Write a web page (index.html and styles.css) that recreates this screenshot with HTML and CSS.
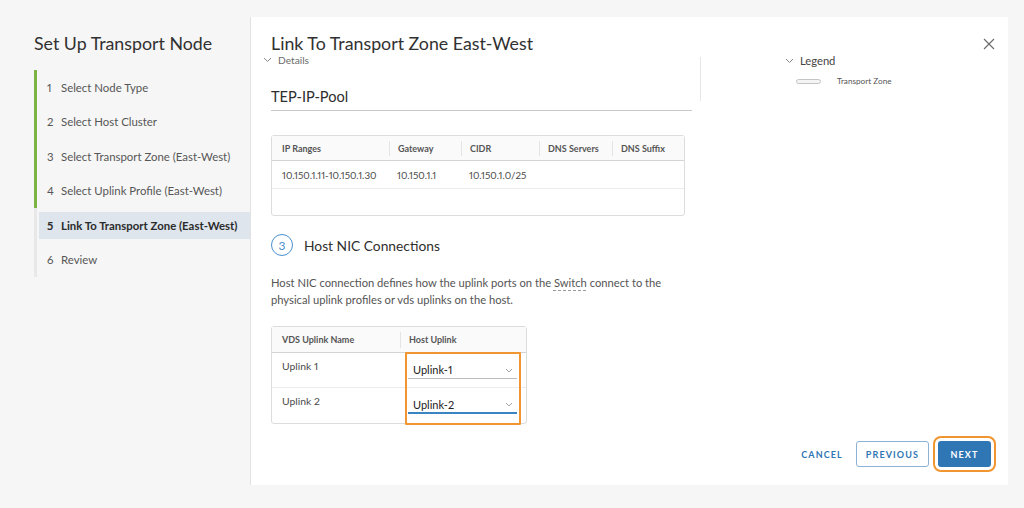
FILE: index.html
```html
<!DOCTYPE html>
<html lang="en">
    <head>
        <title>Set Up Transport Node</title>
        <link rel="stylesheet" href="styles.css">
    </head>
    <body>
        <div class="page">
            <aside class="wizard-nav">
                <h1 class="wizard-title">Set Up Transport Node</h1>
                <ol class="steps">
                    <li class="step done"><span class="step-label"><span class="step-num">1</span>Select Node Type</span></li>
                    <li class="step done"><span class="step-label"><span class="step-num">2</span>Select Host Cluster</span></li>
                    <li class="step done"><span class="step-label"><span class="step-num">3</span>Select Transport Zone (East-West)</span></li>
                    <li class="step done"><span class="step-label"><span class="step-num">4</span>Select Uplink Profile (East-West)</span></li>
                    <li class="step active"><span class="step-label"><span class="step-num">5</span>Link To Transport Zone (East-West)</span></li>
                    <li class="step"><span class="step-label"><span class="step-num">6</span>Review</span></li>
                </ol>
            </aside>

            <section class="modal">
                <header class="modal-header">
                    <h2 class="modal-title">Link To Transport Zone East-West</h2>
                    <button class="close-btn" aria-label="Close">
                        <svg width="12" height="12" viewBox="0 0 12 12"><path d="M1 1 L11 11 M11 1 L1 11" stroke="#6a6a6a" stroke-width="1.1" fill="none"/></svg>
                    </button>
                </header>

                <div class="modal-body">
                    <div class="main-col">
                        <div class="toggle details-toggle">
                            <svg class="chev" width="9" height="6" viewBox="0 0 9 6"><path d="M1 1 L4.5 4.5 L8 1" stroke="#8a8a8a" stroke-width="1" fill="none"/></svg>
                            Details
                        </div>

                        <div class="pool-field">TEP-IP-Pool</div>

                        <table class="grid pool-grid">
                            <thead>
                                <tr>
                                    <th class="c-range">IP Ranges</th>
                                    <th class="c-gw">Gateway</th>
                                    <th class="c-cidr">CIDR</th>
                                    <th class="c-dns">DNS Servers</th>
                                    <th class="c-suffix">DNS Suffix</th>
                                </tr>
                            </thead>
                            <tbody>
                                <tr>
                                    <td>10.150.1.11-10.150.1.30</td>
                                    <td>10.150.1.1</td>
                                    <td>10.150.1.0/25</td>
                                    <td></td>
                                    <td></td>
                                </tr>
                                <tr class="empty-row">
                                    <td></td><td></td><td></td><td></td><td></td>
                                </tr>
                            </tbody>
                        </table>

                        <div class="section-head">
                            <span class="section-num">3</span>
                            <h3 class="section-title">Host NIC Connections</h3>
                        </div>

                        <p class="section-desc">Host NIC connection defines how the uplink ports on the <abbr class="term">Switch</abbr> connect to the physical uplink profiles or vds uplinks on the host.</p>

                        <div class="uplink-wrap">
                            <table class="grid uplink-grid">
                                <thead>
                                    <tr>
                                        <th class="c-name">VDS Uplink Name</th>
                                        <th class="c-host">Host Uplink</th>
                                    </tr>
                                </thead>
                                <tbody>
                                    <tr>
                                        <td>Uplink 1</td>
                                        <td class="select-cell">
                                            <div class="select">
                                                <span>Uplink-1</span>
                                                <svg width="8" height="5" viewBox="0 0 8 5"><path d="M1 1 L4 4 L7 1" stroke="#9a9a9a" stroke-width="0.9" fill="none"/></svg>
                                            </div>
                                        </td>
                                    </tr>
                                    <tr>
                                        <td>Uplink 2</td>
                                        <td class="select-cell">
                                            <div class="select focused">
                                                <span>Uplink-2</span>
                                                <svg width="8" height="5" viewBox="0 0 8 5"><path d="M1 1 L4 4 L7 1" stroke="#9a9a9a" stroke-width="0.9" fill="none"/></svg>
                                            </div>
                                        </td>
                                    </tr>
                                </tbody>
                            </table>
                            <div class="highlight uplink-highlight"></div>
                        </div>
                    </div>

                    <div class="divider"></div>

                    <div class="legend">
                        <div class="toggle legend-toggle">
                            <svg class="chev" width="9" height="6" viewBox="0 0 9 6"><path d="M1 1 L4.5 4.5 L8 1" stroke="#8a8a8a" stroke-width="1" fill="none"/></svg>
                            Legend
                        </div>
                        <div class="legend-item">
                            <span class="swatch"></span>
                            <span>Transport Zone</span>
                        </div>
                    </div>
                </div>

                <footer class="modal-footer">
                    <button class="btn btn-flat">Cancel</button>
                    <button class="btn btn-outline">Previous</button>
                    <button class="btn btn-primary">Next</button>
                </footer>
            </section>
        </div>
    </body>
</html>
```

FILE: styles.css
```css
* {
    box-sizing: border-box;
    font-family: Lato, "Open Sans", sans-serif;
    font-variant-numeric: proportional-nums;
}

body {
    margin: 0;
    background-color: #f6f6f6;
    color: #333;
}

.page {
    display: flex;
    height: 508px;
    padding: 17px 16px 23px 0;
}

/* Left side: wizard steps */

.wizard-nav {
    width: 250px;
    flex: none;
    padding-left: 34px;
}

.wizard-title {
    margin: 15px 0 0;
    font-size: 17.8px;
    font-weight: 400;
    line-height: 22px;
    color: #313131;
}

.steps {
    list-style: none;
    margin: 16px 0 0;
    padding: 0;
}

.step {
    height: 34.5px;
    border-left: 3px solid #e8e8e8;
    padding: 3.75px 0 3.75px 2px;
}

.step.done {
    border-left-color: #7cb342;
}

.step-label {
    display: flex;
    align-items: center;
    height: 27px;
    padding-left: 8px;
    font-size: 11.4px;
    color: #565656;
    white-space: nowrap;
}

.step-num {
    width: 14px;
}

.step.active .step-label {
    background-color: #dee5ec;
    color: #2b2b2b;
    font-weight: 700;
}

/* Right side: modal */

.modal {
    flex: 1;
    display: flex;
    flex-direction: column;
    background-color: #fff;
    border-left: 1px solid #e2e2e2;
    padding-left: 20px;
}

.modal-header {
    display: flex;
    justify-content: space-between;
    align-items: center;
    padding: 13px 13px 0 0;
}

.modal-title {
    margin: 0;
    font-size: 17.8px;
    font-weight: 400;
    line-height: 26px;
    color: #313131;
}

.close-btn {
    border: none;
    background: none;
    padding: 0;
    width: 12px;
    height: 12px;
}

.modal-body {
    flex: 1;
    display: flex;
    align-items: flex-start;
    margin-top: -2px;
}

.main-col {
    width: 421px;
}

.toggle {
    display: flex;
    align-items: center;
    gap: 6px;
}

.details-toggle {
    margin-left: -8px;
    font-size: 10.2px;
    line-height: 12px;
    color: #6b6b6b;
}

.pool-field {
    margin-top: 22px;
    padding-bottom: 4px;
    font-size: 14.6px;
    line-height: 18px;
    color: #2f2f2f;
    border-bottom: 1px solid #c9c9c9;
}

/* Tables */

.grid {
    border-collapse: separate;
    border-spacing: 0;
    border: 1px solid #dcdcdc;
    border-radius: 3px;
    table-layout: fixed;
}

.grid th {
    position: relative;
    height: 25px;
    padding: 0 9px;
    text-align: left;
    font-size: 9px;
    font-weight: 700;
    color: #555;
    background-color: #fafafa;
    border-bottom: 1px solid #d4d4d4;
    white-space: nowrap;
}

.grid th + th::before {
    content: "";
    position: absolute;
    left: 0;
    top: 5px;
    bottom: 4px;
    border-left: 1px solid #e4e4e4;
}

.grid th:first-child,
.grid td:first-child {
    padding-left: 10px;
}

.grid td {
    font-size: 10px;
    color: #4a4a4a;
    padding: 0 8px;
    border-bottom: 1px solid #ececec;
    white-space: nowrap;
}

.grid tbody tr:last-child td {
    border-bottom: none;
}

.pool-grid {
    margin-top: 24px;
    width: 414px;
}

.pool-grid td {
    height: 28px;
    font-size: 9.8px;
}

.pool-grid .empty-row td {
    height: 26px;
}

.c-range { width: 117px; }
.c-gw { width: 72px; }
.c-cidr { width: 78px; }
.c-dns { width: 73px; }

/* Host NIC section */

.section-head {
    display: flex;
    align-items: center;
    gap: 11px;
    margin-top: 18px;
}

.section-num {
    width: 22px;
    height: 22px;
    border: 1px solid #4a90cf;
    border-radius: 50%;
    display: flex;
    align-items: center;
    justify-content: center;
    font-size: 12px;
    color: #4a90cf;
}

.section-title {
    margin: 0;
    font-size: 13.8px;
    font-weight: 400;
    color: #2f2f2f;
}

.section-desc {
    margin: 18px 0 0;
    font-size: 11.2px;
    line-height: 17px;
    color: #555;
    max-width: 415px;
}

.term {
    text-decoration: underline dashed #9a9a9a;
    text-underline-offset: 3px;
}

.uplink-wrap {
    position: relative;
    margin-top: 18px;
    width: 256px;
}

.uplink-grid {
    width: 256px;
}

.uplink-grid th {
    height: 26px;
}

.c-name { width: 128px; }

.uplink-grid td {
    height: 35px;
    vertical-align: top;
    padding-top: 6px;
    line-height: 14px;
    font-size: 10.4px;
}

.uplink-grid td.select-cell {
    padding: 9px 9px 0 8px;
}

.select {
    display: flex;
    align-items: center;
    justify-content: space-between;
    height: 17px;
    padding: 0 4px 0 5px;
    border-bottom: 1px solid #bdbdbd;
    font-size: 11px;
    color: #222;
}

.select.focused {
    border-bottom: 2px solid #3b84c4;
}

.highlight {
    position: absolute;
    border: 2px solid #f0952f;
    border-radius: 1px;
}

.uplink-highlight {
    left: 134px;
    top: 26px;
    width: 116px;
    height: 73px;
}

/* Legend */

.divider {
    width: 1px;
    height: 44px;
    margin: 3px 0 0 8px;
    background-color: #e6e6e6;
}

.legend {
    padding-left: 84px;
}

.legend-toggle {
    font-size: 11.2px;
    line-height: 14px;
    color: #444;
}

.legend-item {
    display: flex;
    align-items: center;
    gap: 16px;
    margin-top: 8px;
    padding-left: 11px;
    font-size: 8.2px;
    color: #555;
}

.swatch {
    width: 25px;
    height: 5px;
    border: 1px solid #c4c4c4;
    border-radius: 3px;
    background-color: #f4f4f4;
}

/* Footer buttons */

.modal-footer {
    display: flex;
    justify-content: flex-end;
    align-items: center;
    gap: 9px;
    padding: 0 17px 18px 0;
}

.btn {
    height: 26px;
    padding: 0 9px;
    font-size: 9px;
    font-weight: 700;
    letter-spacing: 1.1px;
    text-transform: uppercase;
    border-radius: 3px;
    border: 1px solid transparent;
}

.btn-flat {
    background: none;
    color: #2f76b5;
    padding: 0 3px 0 6px;
}

.btn-outline {
    background: #fff;
    color: #2f76b5;
    border-color: #8cb2d6;
}

.btn-primary {
    width: 53px;
    padding: 0;
    background-color: #2f76b5;
    color: #fff;
    outline: 2px solid #f0952f;
    outline-offset: 3px;
}
```
